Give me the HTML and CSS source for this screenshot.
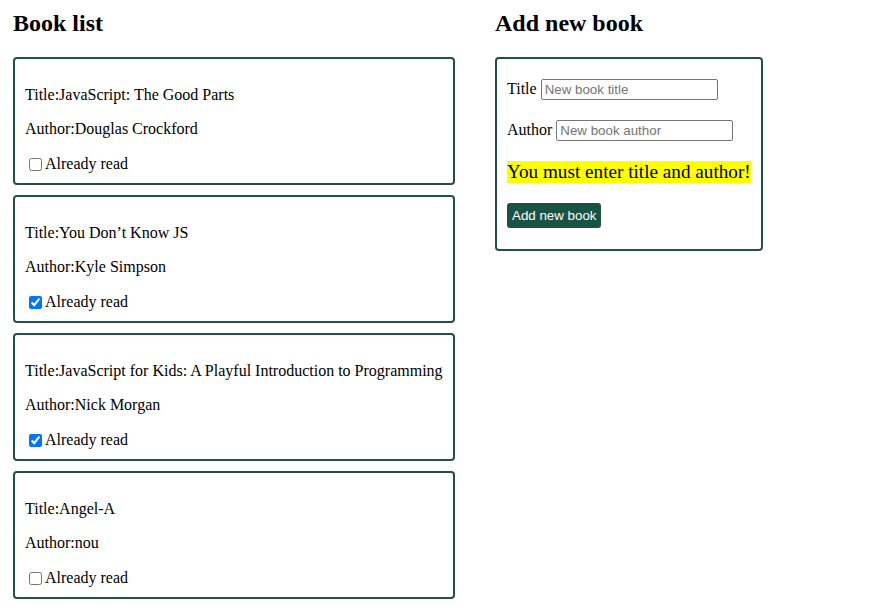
FILE: index.html
```html
<!DOCTYPE html>
<html>
<head>
<meta charset="utf-8">
<title>Books</title>
<link rel="stylesheet" href="styles.css">
</head>
<body>
<div class="page">
  <section class="col-list">
    <h2>Book list</h2>
    <div class="books">
      <div class="book">
        <p>Title:JavaScript: The Good Parts</p>
        <p>Author:Douglas Crockford</p>
        <label class="read"><input type="checkbox">Already read</label>
      </div>
      <div class="book">
        <p>Title:You Don’t Know JS</p>
        <p>Author:Kyle Simpson</p>
        <label class="read"><input type="checkbox" checked>Already read</label>
      </div>
      <div class="book">
        <p>Title:JavaScript for Kids: A Playful Introduction to Programming</p>
        <p>Author:Nick Morgan</p>
        <label class="read"><input type="checkbox" checked>Already read</label>
      </div>
      <div class="book">
        <p>Title:Angel-A</p>
        <p>Author:nou</p>
        <label class="read"><input type="checkbox">Already read</label>
      </div>
    </div>
  </section>
  <section class="col-add">
    <h2>Add new book</h2>
    <form class="add-form">
      <label class="field">Title <input type="text" placeholder="New book title"></label>
      <label class="field">Author <input type="text" placeholder="New book author"></label>
      <p class="error">You must enter title and author!</p>
      <button type="button" class="add-btn">Add new book</button>
    </form>
  </section>
</div>
</body>
</html>
```

FILE: styles.css
```css
html, body {
  margin: 0;
  background: #ffffff;
}

body {
  font-family: "Liberation Serif", "Times New Roman", serif;
  font-size: 16px;
  color: #000;
}

.page {
  display: flex;
  align-items: flex-start;
  gap: 40px;
  padding: 10px 13px;
}

h2 {
  font-size: 24px;
  font-weight: bold;
  margin: 0 0 20px;
  line-height: normal;
}

.col-list {
  width: 442px;
}

.books {
  display: flex;
  flex-direction: column;
  gap: 10px;
}

.book {
  border: 2px solid #244f48;
  border-radius: 4px;
  padding: 11px 10px 9px;
}

.book p {
  margin: 16px 0;
  line-height: 18px;
}

.read {
  display: block;
  margin-top: 1px;
  line-height: 19px;
}

.read input {
  margin: 3px 3px 3px 4px;
  width: 13px;
  height: 13px;
  vertical-align: -2px;
}

.add-form {
  box-sizing: border-box;
  width: 268px;
  border: 2px solid #244f48;
  border-radius: 4px;
  padding: 20px 10px 21px;
  display: flex;
  flex-direction: column;
  align-items: flex-start;
  gap: 20px;
}

.field {
  display: flex;
  align-items: baseline;
  gap: 4px;
}

.field input {
  box-sizing: border-box;
  width: 177px;
  height: 21px;
  margin: 0;
  padding: 1px 3px;
  border: 1px solid #767676;
  border-radius: 2px;
  font-family: "Liberation Sans", Arial, sans-serif;
  font-size: 13.33px;
  color: #000;
}

.field input::placeholder {
  color: #757575;
}

.error {
  margin: 0;
  font-size: 19.2px;
  line-height: 22px;
  background: #ffff00;
  white-space: nowrap;
}

.add-btn {
  margin: 0;
  background: #1a5244;
  color: #fff;
  border: none;
  border-radius: 3px;
  padding: 0 5px;
  height: 25px;
  font-family: "Liberation Sans", Arial, sans-serif;
  font-size: 13.33px;
}
```
